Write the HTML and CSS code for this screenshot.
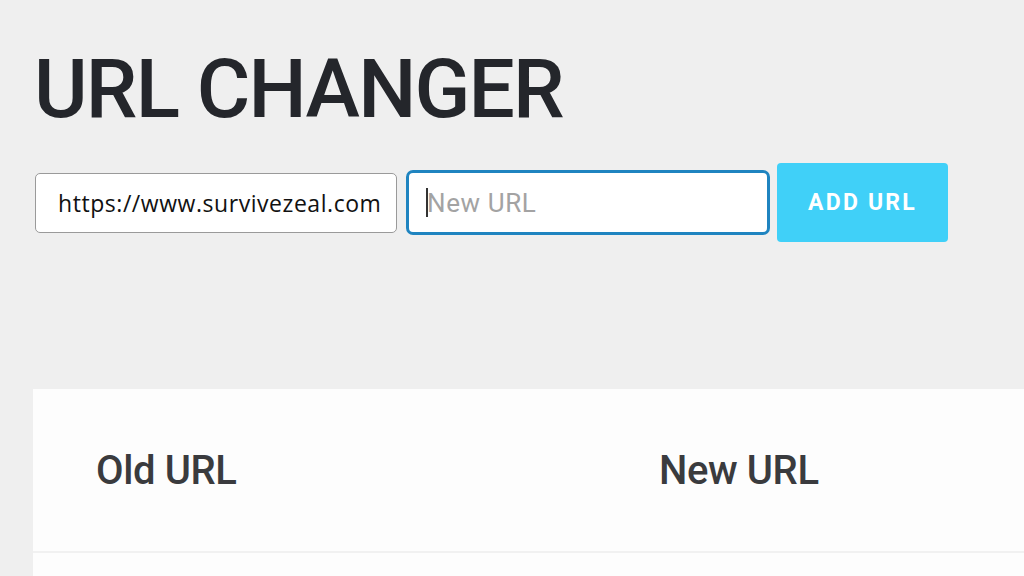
FILE: index.html
```html
<!DOCTYPE html>
<html lang="en">
<head>
  <meta charset="UTF-8" />
  <meta name="viewport" content="width=device-width, initial-scale=1.0"/>
  <title>URL Changer</title>
  <link rel="stylesheet" href="styles.css">
</head>
<body>
  <h1 class="title">URL CHANGER</h1>

  <!-- Add form -->
  <form class="url-form" onsubmit="return false;">
    <input type="text" class="old-url" value="https://www.survivezeal.com" />
    <div class="new-url-wrap">
      <span class="caret"></span>
      <input type="text" class="new-url" placeholder="New URL" />
    </div>
    <button type="submit" class="add-btn">ADD URL</button>
  </form>

  <!-- Table -->
  <div class="table-card">
    <div class="table-head">
      <div class="col">Old URL</div>
      <div class="col">New URL</div>
    </div>
    <div class="table-row"></div>
  </div>
</body>
</html>
```

FILE: styles.css
```css
* {
  box-sizing: border-box;
  margin: 0;
}

body {
  background: #efefef;
  font-family: 'Roboto', sans-serif;
  color: #25272b;
  padding: 48px 0 0 33px;
  overflow: hidden;
}

.title {
  font-size: 82px;
  font-weight: 500;
  line-height: 1;
  letter-spacing: -1.8px;
  margin-left: 1px;
  color: #24262b;
}

.url-form {
  display: flex;
  align-items: center;
  gap: 7px;
  margin-top: 33px;
  margin-left: 2px;
}

.old-url {
  width: 362px;
  height: 60px;
  border: 1.5px solid #9a9a9a;
  border-radius: 5px;
  background: #fff;
  padding: 0 0 0 22px;
  font-family: 'Open Sans', sans-serif;
  font-size: 23px;
  letter-spacing: 0.55px;
  color: #111;
}

.new-url-wrap {
  position: relative;
  margin-left: 2px;
}

.new-url {
  width: 364px;
  height: 65px;
  border: 3px solid #1f84c0;
  border-radius: 7px;
  background: #fff;
  padding: 0 0 0 18px;
  font-family: 'Roboto', sans-serif;
  font-size: 26px;
  letter-spacing: 0.6px;
  outline: none;
}

.new-url::placeholder {
  color: #a3a3a3;
}

.caret {
  position: absolute;
  left: 20px;
  top: 18px;
  width: 2px;
  height: 29px;
  background: #333;
}

.add-btn {
  width: 171px;
  height: 79px;
  border: none;
  border-radius: 4px;
  background: #40d0f8;
  color: #fff;
  font-family: 'Roboto', sans-serif;
  font-weight: 700;
  font-size: 23px;
  letter-spacing: 2.2px;
  cursor: pointer;
}

.table-card {
  margin-top: 147px;
  background: #fdfdfd;
}

.table-head {
  display: grid;
  grid-template-columns: 563px 1fr;
  height: 164px;
  align-items: center;
  padding-left: 63px;
  border-bottom: 2px solid #f1f1f1;
}

.col {
  font-size: 40px;
  font-weight: 500;
  letter-spacing: -0.4px;
  color: #3a3b3e;
}

.table-row {
  height: 60px;
}
```
